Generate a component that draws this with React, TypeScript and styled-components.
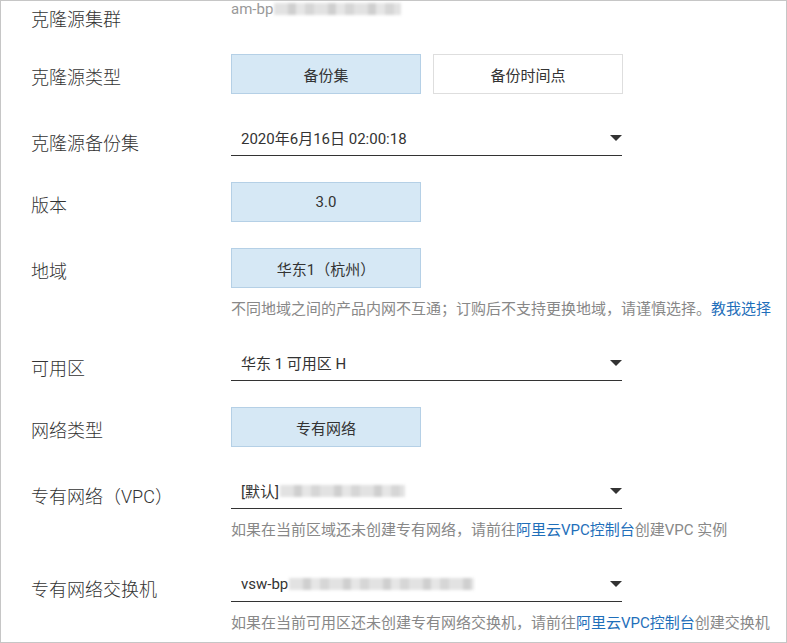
import React from 'react'
import styled, { createGlobalStyle } from 'styled-components'

const GlobalStyle = createGlobalStyle`
  html, body {
    margin: 0;
    padding: 0;
    background: #fff;
  }
  body {
    font-family: Roboto, "Noto Sans CJK SC", sans-serif;
    color: #333;
  }
`

const Frame = styled.div`
  width: 787px;
  height: 643px;
  box-sizing: border-box;
  border: 1px solid #c6c6c6;
  background: #fff;
  overflow: hidden;
`

const Form = styled.div`
  display: flex;
  flex-direction: column;
  gap: 26px;
`

const Row = styled.div<{ $pull?: number }>`
  display: flex;
  align-items: flex-start;
  margin-bottom: ${p => (p.$pull ? -p.$pull : 0)}px;
`

const Label = styled.div<{ $top?: number }>`
  width: 230px;
  box-sizing: border-box;
  padding-left: 30px;
  padding-top: ${p => p.$top ?? 12}px;
  font-size: 18px;
  font-weight: 300;
  line-height: 24px;
  color: #333;
  white-space: nowrap;
`

const Field = styled.div`
  display: flex;
  flex-direction: column;
  width: 391px;
`

const StaticValue = styled.div`
  display: flex;
  align-items: center;
  font-size: 15px;
  line-height: 16px;
  color: #999;
`

const Masked = styled.span<{ $w: number }>`
  display: inline-block;
  width: ${p => p.$w}px;
  height: 12px;
  margin-left: 1px;
  background: repeating-linear-gradient(
    90deg,
    #e2e2e2 0 14px,
    #cfcfcf 14px 22px,
    #e6e6e6 22px 31px,
    #d6d6d6 31px 40px
  );
  filter: blur(1.5px);
`

const Choices = styled.div`
  display: flex;
  gap: 12px;
`

const Option = styled.div<{ $active?: boolean }>`
  width: 190px;
  height: 40px;
  box-sizing: border-box;
  display: flex;
  align-items: center;
  justify-content: center;
  font-size: 15px;
  color: #333;
  background: ${p => (p.$active ? '#d6e8f5' : '#fff')};
  border: 1px solid ${p => (p.$active ? '#b5d0e6' : '#dedede')};
`

const Select = styled.div`
  height: 36px;
  box-sizing: border-box;
  display: flex;
  align-items: center;
  justify-content: space-between;
  padding: 0 0 0 10px;
  border-bottom: 1px solid #333;
  font-size: 15px;
  color: #333;
`

const SelectText = styled.span`
  display: flex;
  align-items: center;
  white-space: nowrap;
`

const Caret = styled.span`
  width: 0;
  height: 0;
  border-left: 6px solid transparent;
  border-right: 6px solid transparent;
  border-top: 6px solid #333;
`

const Help = styled.div`
  margin-top: 11px;
  font-size: 15px;
  line-height: 20px;
  color: #888;
  white-space: nowrap;
`

const Link = styled.a`
  color: #1f6fba;
  text-decoration: none;
`

export default function App() {
  return (
    <Frame>
      <GlobalStyle />
      <Form>
        <Row $pull={4}>
          <Label $top={7}>克隆源集群</Label>
          <Field>
            <StaticValue>
              am-bp<Masked $w={127} />
            </StaticValue>
          </Field>
        </Row>

        <Row>
          <Label>克隆源类型</Label>
          <Choices>
            <Option $active>备份集</Option>
            <Option>备份时间点</Option>
          </Choices>
        </Row>

        <Row>
          <Label>克隆源备份集</Label>
          <Field>
            <Select>
              <SelectText>2020年6月16日 02:00:18</SelectText>
              <Caret />
            </Select>
          </Field>
        </Row>

        <Row>
          <Label>版本</Label>
          <Option $active>3.0</Option>
        </Row>

        <Row>
          <Label>地域</Label>
          <Field>
            <Option $active>华东1（杭州）</Option>
            <Help>
              不同地域之间的产品内网不互通；订购后不支持更换地域，请谨慎选择。<Link>教我选择</Link>
            </Help>
          </Field>
        </Row>

        <Row>
          <Label>可用区</Label>
          <Field>
            <Select>
              <SelectText>华东 1 可用区 H</SelectText>
              <Caret />
            </Select>
          </Field>
        </Row>

        <Row>
          <Label>网络类型</Label>
          <Option $active>专有网络</Option>
        </Row>

        <Row>
          <Label>专有网络（VPC）</Label>
          <Field>
            <Select>
              <SelectText>
                [默认]<Masked $w={125} />
              </SelectText>
              <Caret />
            </Select>
            <Help>
              如果在当前区域还未创建专有网络，请前往<Link>阿里云VPC控制台</Link>创建VPC 实例
            </Help>
          </Field>
        </Row>

        <Row>
          <Label>专有网络交换机</Label>
          <Field>
            <Select>
              <SelectText>
                vsw-bp<Masked $w={185} />
              </SelectText>
              <Caret />
            </Select>
            <Help>
              如果在当前可用区还未创建专有网络交换机，请前往<Link>阿里云VPC控制台</Link>创建交换机
            </Help>
          </Field>
        </Row>
      </Form>
    </Frame>
  )
}
